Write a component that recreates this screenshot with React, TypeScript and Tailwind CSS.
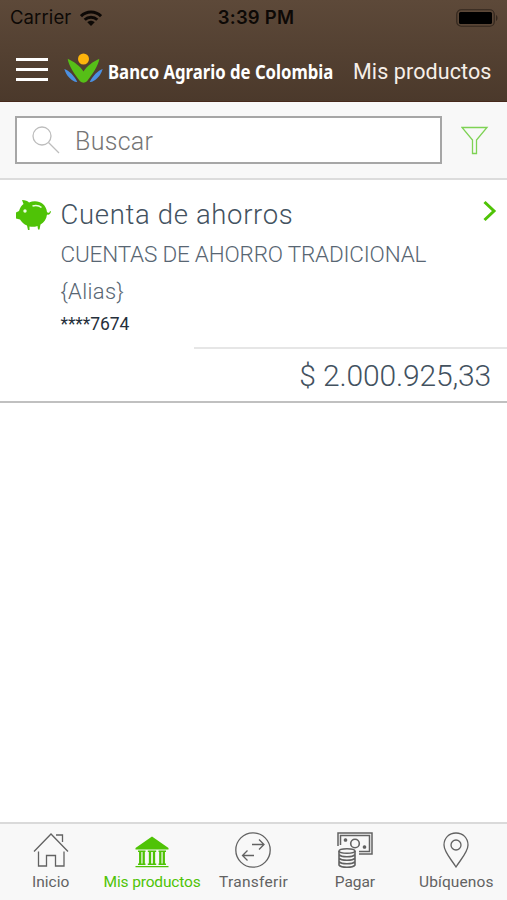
import { FC, ReactNode } from "react";

interface TabProps {
    label: string;
    labelClass: string;
    active?: boolean;
    children: ReactNode;
}

export default function App() {
    return (
        <div className="flex h-[900px] w-[507px] flex-col overflow-hidden bg-white font-['Roboto',sans-serif]">
            <header className="h-[102px] shrink-0 border-b border-[#46291c] bg-linear-to-b from-[#5d4939] to-[#4b392b]">
                <StatusBar />
                <NavBar />
            </header>
            <SearchBar />
            <ProductCard />
            <main className="flex-1" />
            <TabBar />
        </div>
    );
}

function StatusBar() {
    return (
        <div className="grid h-[35px] grid-cols-3 items-center pr-[9px] pl-[10px] font-['Inter',sans-serif] text-[18.5px] leading-[35px] text-[#0d0906]">
            <div className="flex items-center gap-[9px]">
                <span className="tracking-[0.1px]">Carrier</span>
                <svg className="h-[16px] w-[22px]" viewBox="0 0 22 16" fill="none" stroke="currentColor" strokeWidth="3">
                    <path d="M1 6.2C6.5 .7 15.500 .7 21 6.200" />
                    <path d="M4.700 9.800C8.200 6.300 13.800 6.300 17.300 9.800" />
                    <path d="M7.300 12.300C9.500 10.300 12.500 10.300 14.700 12.300L11 16z" fill="currentColor" stroke="none" />
                </svg>
            </div>
            <span className="ml-1 text-center font-semibold tracking-[0.200px] whitespace-nowrap">3:39 PM</span>
            <svg className="h-[18px] w-[42px] justify-self-end" viewBox="0 0 42 18">
                <rect x="0.750" y="0.750" width="37.500" height="16.500" rx="4.500" fill="none" stroke="#33271e" strokeWidth="1.200" />
                <rect x="3" y="3" width="33" height="12" rx="1.500" fill="#000" />
                <path d="M40 6c2 1.200 2 4.800 0 6z" fill="#33271e" />
            </svg>
        </div>
    );
}

function NavBar() {
    return (
        <div className="flex h-[66px] items-center pl-4 text-[#f6eee8]">
            <div className="mt-[2px] flex w-8 shrink-0 flex-col gap-[7px]">
                <span className="h-[3px] bg-white" />
                <span className="h-[3px] bg-white" />
                <span className="h-[3px] bg-white" />
            </div>
            <svg className="ml-4 h-[30px] w-[39px] shrink-0" viewBox="0 0 39 30">
                <circle cx="19.500" cy="6" r="5.500" fill="#fdb40c" />
                <path
                    d="M3.700 5.700C10 8.500 16 13 19.500 18.500C23 13 29 8.500 35.300 5.700C34.500 12.500 28 22 23 28.300Q19.500 31 16 28.300C11 22 4.500 12.500 3.700 5.700z"
                    fill="#56bf17"
                />
                <path d="M0.300 16C5 17.500 10.500 23 13.300 29C8.500 29.500 2 22.500 0.300 16z" fill="#4c90e2" />
                <path d="M38.700 16C34 17.500 28.500 23 25.700 29C30.500 29.500 37 22.500 38.700 16z" fill="#4c90e2" />
            </svg>
            <div className="mt-[10px] ml-[5px] w-[227px] shrink-0">
                <span className="inline-block origin-left scale-x-[0.880] font-['Noto_Sans',sans-serif] text-[19px] leading-6 font-bold whitespace-nowrap text-white">
                    Banco Agrario de Colombia
                </span>
            </div>
            <span className="mt-[8px] ml-[18px] text-[21.500px] leading-6 tracking-[0.100px] whitespace-nowrap">Mis productos</span>
        </div>
    );
}

function SearchBar() {
    return (
        <div className="flex h-[78px] shrink-0 items-center border-b-2 border-[#dcdcdc] bg-[#f8f8f8] pl-[15px]">
            <div className="flex h-[48px] w-[427px] items-center border-2 border-[#a6a6a6] bg-white pl-[15px]">
                <svg className="h-[28px] w-[28px]" viewBox="0 0 28 28" fill="none" stroke="#bdbdbd" strokeWidth="1.300">
                    <circle cx="10" cy="10" r="9" />
                    <path d="M16.500 16.500L27 27" />
                </svg>
                <span className="mt-[3px] ml-[15px] text-[25px] leading-7 font-[350] tracking-[0.300px] text-[#757575]">Buscar</span>
            </div>
            <svg className="ml-[19px] h-[29px] w-[28px]" viewBox="0 0 28 29" fill="none" stroke="#7ed254" strokeWidth="1.300">
                <path d="M1 1.500H26L15.500 14V27.500H11.500V14z" />
            </svg>
        </div>
    );
}

function ProductCard() {
    return (
        <section className="h-[223px] shrink-0 border-b-2 border-[#c0c0c0] text-[#43525f]">
            <div className="flex h-[167px] px-[15px] pt-[18px]">
                <svg className="mt-[1px] h-[32px] w-[36px] shrink-0" viewBox="0 0 36 32">
                    <path
                        d="M7 1C10 1 13 2 14 3.500C22 0 31 4 32 13C33.500 14.500 34.500 14 35 12L36 12.500C35.500 15 34 16.300 32 15.500C31.500 20 29 23.500 25.500 25.500L24.500 30.500H23L22.500 27C19.500 28 17 28 14.500 27.500V31H13L12 26.500C9 25.500 6.500 23 5 20.500L1 19.500V13.500L4 12C5 8.500 6.500 6.500 8.500 5z"
                        fill="#4fc306"
                    />
                    <circle cx="10" cy="12" r="1.700" fill="#eaffdf" />
                    <path d="M17.500 7C21 6 24 6.500 26.500 8.500" fill="none" stroke="#eaffdf" strokeWidth="1.600" />
                </svg>
                <div className="ml-[9.500px] flex-1 whitespace-nowrap">
                    <h2 className="text-[27.500px] leading-[34px] font-[350] tracking-[0.660px]">Cuenta de ahorros</h2>
                    <p className="mt-[5px] text-[22.500px] leading-[34px] font-[350] tracking-[-0.180px] text-[#586673]">
                        CUENTAS DE AHORRO TRADICIONAL
                    </p>
                    <p className="mt-[4px] text-[22px] leading-[34px] font-[350] tracking-[0.350px] text-[#586673]">{"{Alias}"}</p>
                    <p className="text-[17.500px] leading-[31px] tracking-[-0.100px] text-[#252f3b]">****7674</p>
                </div>
                <svg className="mt-[2px] mr-[-5px] h-[22px] w-[14px] shrink-0" viewBox="0 0 14 22" fill="none" stroke="#4fc306" strokeWidth="3">
                    <path d="M1.500 2L11 11L1.500 20" />
                </svg>
            </div>
            <div className="ml-[194px] h-[54px] border-t-2 border-[#e6e6e6] pt-[9px] pr-[16px] text-right text-[30px] leading-[36px] font-[350] tracking-[-0.150px]">
                $ 2.000.925,33
            </div>
        </section>
    );
}

const Tab: FC<TabProps> = ({ label, labelClass, active = false, children }) => (
    <div className={`flex flex-col items-center ${active ? "text-[#4fc306]" : "text-[#626262]"}`}>
        <svg className="mt-[7px] h-[38px] w-[38px]" viewBox="0 0 38 38" fill="none" stroke="currentColor" strokeWidth="1.300">
            {children}
        </svg>
        <span className={`mt-[2px] text-[15.500px] leading-[22px] whitespace-nowrap ${labelClass}`}>{label}</span>
    </div>
);

function TabBar() {
    return (
        <nav className="grid h-[78px] shrink-0 grid-cols-5 border-t-2 border-[#dadada] bg-[#f8f8f8]">
            <Tab label="Inicio" labelClass="tracking-[0.050px]">
                <path d="M2 20.500L19 3L36 20.500M6.500 20.500V35H14.500V24.500H23.500V35H32V20.500M24 4H30.500V11" />
            </Tab>
            <Tab label="Mis productos" labelClass="tracking-[-0.150px]" active>
                <path
                    d="M19 5.500L35.500 17V18.500H2.500V17zM2.500 35H35.500V36.300H2.500z"
                    fill="currentColor"
                    stroke="none"
                />
                <path d="M5 20.300H12.500M14.800 20.300H23.200M25.500 20.300H33M5 33.300H12.500M14.800 33.300H23.200M25.500 33.300H33" strokeWidth="1.500" />
                <path d="M7.200 20V34M10.700 20V34M17 20V34M21 20V34M27.300 20V34M30.800 20V34" strokeWidth="2.300" />
            </Tab>
            <Tab label="Transferir" labelClass="tracking-[0.250px]">
                <circle cx="19" cy="19" r="17.200" />
                <path d="M18 13.500H30M25 8.500L30 13.500L25 18.500M20 24.500H8.500M13.500 19.500L8.500 24.500L13.500 29.500" />
            </Tab>
            <Tab label="Pagar" labelClass="tracking-[-0.050px]">
                <path d="M2 15V2H36V23H23M4.500 14V4.500H33.500V20.500H23" strokeWidth="1.500" />
                <circle cx="19" cy="12.500" r="4.300" strokeWidth="1.600" />
                <circle cx="9.500" cy="9" r="1.200" fill="currentColor" />
                <circle cx="28.500" cy="16" r="1.200" fill="currentColor" />
                <ellipse cx="11" cy="20" rx="8" ry="2.300" fill="#f8f8f8" strokeWidth="1.500" />
                <path
                    d="M3 20V34C5 37 17 37 19 34V20M3 23.500C5 26.500 17 26.500 19 23.500M3 27C5 30 17 30 19 27M3 30.500C5 33.500 17 33.500 19 30.500"
                    strokeWidth="1.600"
                />
            </Tab>
            <Tab label="Ubíquenos" labelClass="tracking-[0.100px]">
                <path d="M19 36C14 28 7 21 7 14C7 7 12 2 19 2S31 7 31 14C31 21 24 28 19 36z" />
                <circle cx="19" cy="14" r="5" />
            </Tab>
        </nav>
    );
}
